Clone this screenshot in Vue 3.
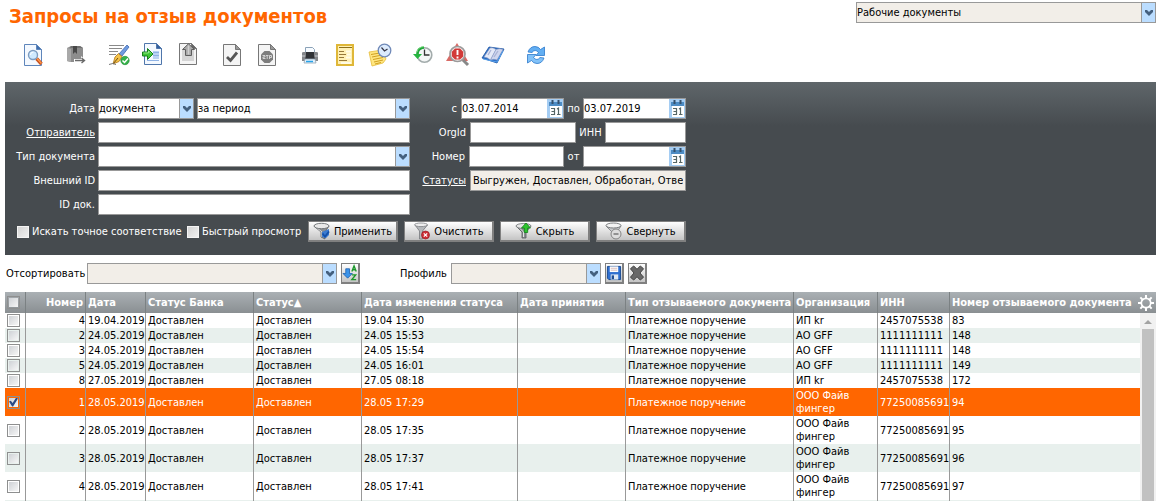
<script setup>
import { ref } from 'vue'

const section = ref('Рабочие документы')
const dateKind = ref('документа')
const dateRange = ref('за период')
const dateFrom = ref('03.07.2014')
const dateTo = ref('03.07.2019')
const statuses = ref('Выгружен, Доставлен, Обработан, Отвергнут')

const columns = [
  { key: 'num', title: 'Номер' },
  { key: 'date', title: 'Дата' },
  { key: 'bank', title: 'Статус Банка' },
  { key: 'status', title: 'Статус▲' },
  { key: 'changed', title: 'Дата изменения статуса' },
  { key: 'accepted', title: 'Дата принятия' },
  { key: 'type', title: 'Тип отзываемого документа' },
  { key: 'org', title: 'Организация' },
  { key: 'inn', title: 'ИНН' },
  { key: 'ref', title: 'Номер отзываемого документа' },
]

const make = (num, date, changed, org, inn, refNum, checked = false) => ({
  num, date, bank: 'Доставлен', status: 'Доставлен', changed, accepted: '',
  type: 'Платежное поручение', org, inn, ref: refNum, checked,
})

const rows = ref([
  make('4', '19.04.2019', '19.04 15:30', 'ИП kr', '2457075538', '83'),
  make('2', '24.05.2019', '24.05 15:53', 'АО GFF', '1111111111', '148'),
  make('3', '24.05.2019', '24.05 15:54', 'АО GFF', '1111111111', '148'),
  make('5', '24.05.2019', '24.05 16:01', 'АО GFF', '1111111111', '149'),
  make('8', '27.05.2019', '27.05 08:18', 'ИП kr', '2457075538', '172'),
  make('1', '28.05.2019', '28.05 17:29', 'ООО Файв фингер', '772500856912', '94', true),
  make('2', '28.05.2019', '28.05 17:35', 'ООО Файв фингер', '772500856912', '95'),
  make('3', '28.05.2019', '28.05 17:37', 'ООО Файв фингер', '772500856912', '96'),
  make('4', '28.05.2019', '28.05 17:41', 'ООО Файв фингер', '772500856912', '97'),
])
</script>

<template>
  <div class="page">
    <header class="top">
      <h1>Запросы на отзыв документов</h1>
      <div class="combo muted section">
        <select v-model="section" aria-label="Раздел"><option>Рабочие документы</option></select>
        <span class="arrow"><svg viewBox="0 0 8 6"><path d="M0 0h2l2 2 2-2h2v2L4 6 0 2z" /></svg></span>
      </div>
    </header>

    <nav class="toolbar">
      <div class="group">
        <button aria-label="Просмотр">
          <svg viewBox="0 0 24 24">
            <path d="M3.500 1.500h12l5 5v16h-17z" fill="#f4f9ff" stroke="#5f86bb" />
            <path d="M15.500 1.500v5h5z" fill="#3f6fae" stroke="#5f86bb" />
            <path d="M15.500 15.500l5 5.500" stroke="#c8501e" stroke-width="3.400" />
            <path d="M16 15.500l4.500 5" stroke="#ff9a4a" stroke-width="1.200" />
            <circle cx="12" cy="12" r="4.500" fill="#cfeaff" stroke="#7d9cc0" stroke-width="1.400" />
            <path d="M9.500 12a3 3 0 0 1 3-3" fill="none" stroke="#fff" />
          </svg>
        </button>
      </div>
      <div class="group">
        <button aria-label="Отправить">
          <svg viewBox="0 0 24 24">
            <path d="M3 5l4-2h9l3 2v10l-3 4H7l-4-1z" fill="#8d8d8d" />
            <path d="M3 5l4 1v13l-4-1z" fill="#a9a9a9" />
            <path d="M7 3h9l3 2H6z" fill="#707070" />
            <path d="M9 3h4v8l-2-2-2 2z" fill="#484848" />
            <path d="M10 16h7v-3l5 4.500-5 4.500v-3h-7z" fill="#fff" />
            <path d="M11 17.500h9M17.500 15l3 2.500-3 2.500" fill="none" stroke="#6a6a6a" stroke-width="1.400" />
          </svg>
        </button>
      </div>
      <div class="group">
        <button aria-label="Подписать">
          <svg viewBox="0 0 24 24">
            <path d="M2 2.500h15M2 5.500h13M2 8.500h9M2 11.500h7" stroke="#8a8a8a" />
            <path d="M20 2l2 2-7 9-3-2z" fill="#6f9be0" stroke="#3e67b0" stroke-width=".8" />
            <path d="M11.500 10.500l3.500 3-3 5-6 2.500 2-7z" fill="#f3c24b" stroke="#b27614" stroke-width=".8" />
            <path d="M6 21l5-6" stroke="#6b4a12" />
            <path d="M2 21.500q4-2 7 0" fill="none" stroke="#777" />
            <circle cx="18" cy="17.500" r="4.200" fill="#35b14a" stroke="#1c8a31" stroke-width=".6" />
            <path d="M15.500 17.500l2 2 3.500-4" fill="none" stroke="#fff" stroke-width="1.500" />
          </svg>
        </button>
        <button aria-label="Импорт">
          <svg viewBox="0 0 24 24">
            <path d="M2.500.5h12l5 5v16h-17z" fill="#f4f9ff" stroke="#4f76ab" />
            <path d="M14.500.5v5h5z" fill="#34609f" stroke="#4f76ab" />
            <path d="M11 8h6v8h-6z" fill="#bcd3f3" />
            <path d="M11 9.500h6M11 12.500h6M5 17.500h12" stroke="#8fb2e4" />
            <path d="M.5 9h5V5.500l5.500 5.500-5.500 5.500V13h-5z" fill="#3fc636" stroke="#16801a" />
            <path d="M1.500 10h5V8l2.500 2.500" fill="none" stroke="#a5f09b" stroke-width=".8" />
          </svg>
        </button>
        <button aria-label="Экспорт">
          <svg viewBox="0 0 24 24">
            <path d="M2.500.5h12l5 5v16h-17z" fill="#f5f5f5" stroke="#777" />
            <path d="M14.500.5v5h5z" fill="#666" stroke="#777" />
            <path d="M5 7h4v10H5zM14 7h3v10h-3zM5 13h12v5H5z" fill="#d5d5d5" />
            <path d="M11.500.8l6 5.700h-3v6h-6v-6h-3z" fill="#aaa" stroke="#5e5e5e" />
            <path d="M11.500 2.500v9" stroke="#d0d0d0" stroke-width="1.500" />
          </svg>
        </button>
      </div>
      <div class="group">
        <button aria-label="Принять">
          <svg viewBox="0 0 24 24">
            <path d="M3.500 1.500h12l5 5v16h-17z" fill="#f4f4f4" stroke="#777" />
            <path d="M15.500 1.500v5h5z" fill="#999" stroke="#777" />
            <path d="M7 14l3.500 3.500L17 9.500" fill="none" stroke="#555" stroke-width="2.800" />
          </svg>
        </button>
        <button aria-label="Отклонить">
          <svg viewBox="0 0 24 24">
            <path d="M3.500 1.500h12l5 5v16h-17z" fill="#f4f4f4" stroke="#777" />
            <path d="M15.500 1.500v5h5z" fill="#999" stroke="#777" />
            <path d="M9.500 8h5l3.500 3.500v5L14.500 20h-5L6 16.500v-5z" fill="#7d7d7d" />
            <path d="M7.500 12.500h2.500v1.500H8v1.500h2.500M11 12.500h2.500M12.200 12.500v3.500M14.500 16v-3.500h2v2h-2" fill="none" stroke="#ddd" stroke-width=".9" />
          </svg>
        </button>
      </div>
      <div class="group">
        <button aria-label="Печать">
          <svg viewBox="0 0 24 24">
            <path d="M7.500 4.500h7l2 2v5h-9z" fill="#f7fbff" stroke="#8ba2b8" />
            <path d="M4 10q0-1 1.500-1h13q1.500 0 1.500 1v8H4z" fill="#84878b" />
            <path d="M8 9h8v4l1 3H7l1-3z" fill="#303337" />
            <path d="M4 13h3M17 13h3" stroke="#c8cbd0" />
            <path d="M7 16h10l1 4H6z" fill="#e3f2fd" stroke="#93a4b2" stroke-width=".8" />
            <path d="M8 18.500h7" stroke="#29a3e8" stroke-width="1.500" />
          </svg>
        </button>
        <button aria-label="Реквизиты">
          <svg viewBox="0 0 24 24">
            <path d="M4 2h16v20H4z" fill="#fff0b4" stroke="#dfb738" stroke-width="2" />
            <path d="M6 4.500h13" stroke="#8d701c" />
            <path d="M6 8.500h5M6 11.500h7M6 14.500h5M6 17.500h8" stroke="#97793a" />
            <path d="M13 8.500h5M14 11.500h4M13 14.500h5M8 20h10" stroke="#fffbe6" stroke-width="2" />
          </svg>
        </button>
        <button aria-label="История заметок">
          <svg viewBox="0 0 24 24">
            <path d="M1 9l13-2 4 9-3 4-11 3z" fill="#ffe680" stroke="#e6bd3a" stroke-width=".8" />
            <path d="M3 11.500l9-1.500M4 14l10-2M5 16.500l10-2M6 19l9-2M7 21l6-1.500" stroke="#d0a020" />
            <circle cx="16.500" cy="7.500" r="6.300" fill="#dcebfd" stroke="#7089b8" stroke-width="1.300" />
            <path d="M13.500 4.500l3 3.500 3-2" fill="none" stroke="#334" stroke-width="1.200" />
          </svg>
        </button>
      </div>
      <div class="group">
        <button aria-label="История">
          <svg viewBox="0 0 24 24">
            <circle cx="13.500" cy="12" r="7.300" fill="#f4f6f6" stroke="#a3acac" stroke-width="1.600" />
            <path d="M13.500 6.500V12h5" fill="none" stroke="#333" stroke-width="1.300" />
            <path d="M13 4.500Q6.500 5 6.500 11" fill="none" stroke="#22a83a" stroke-width="2.600" />
            <path d="M2 11h9l-4.500 5z" fill="#25b540" />
            <path d="M13 3.500Q7 4 6 9" fill="none" stroke="#8be38f" stroke-width=".8" />
          </svg>
        </button>
        <button aria-label="Ошибки">
          <svg viewBox="0 0 24 24">
            <path d="M11 0l11 18H0z" fill="#d96a65" />
            <path d="M17 17l5 5" stroke="#888" stroke-width="3" />
            <circle cx="11.500" cy="11" r="7.500" fill="#f8eded" stroke="#9b9b9b" stroke-width="1.700" />
            <path d="M9 5.500h5l3.200 3.200v4.800L14 16.500H9l-3.200-3.200V8.700z" fill="#d23a38" />
            <path d="M11.500 7v5M11.500 13.500v2" stroke="#fff" stroke-width="1.900" />
          </svg>
        </button>
        <button aria-label="Справочник">
          <svg viewBox="0 0 24 24">
            <path d="M1 15L8 4l15 2-7 14z" fill="#2e6fc5" stroke="#1c54a3" stroke-width=".8" />
            <path d="M3 14l6-9q3-1 6 1.500L9.500 17Q6 14 3 14z" fill="#e5eaf8" stroke="#8d9cc4" stroke-width=".6" />
            <path d="M9.500 17L15 6.500q4-1.500 7 0L16 17q-3-1.500-6.500 0z" fill="#cfd6ee" stroke="#8d9cc4" stroke-width=".6" />
            <path d="M7 12l3-5M13 14l4-6" stroke="#aab3d6" stroke-width="1.300" />
            <path d="M2 16l14 3 6-11" fill="none" stroke="#57a2ee" />
          </svg>
        </button>
      </div>
      <div class="group">
        <button aria-label="Обновить">
          <svg viewBox="0 0 24 24">
            <path d="M4 9Q6 3.500 11 3.500q3.500 0 5.500 3L20.500 4v8.500h-8.500l2.500-3Q11 5.500 8 9.500z" fill="#62aef2" stroke="#2c79cc" stroke-width=".8" />
            <path d="M20 15q-2 5.500-7 5.500-3.500 0-5.500-3L3.500 20v-8.500h8.500l-2.500 3q3.500 4 6.500 0z" fill="#82c2f8" stroke="#2c79cc" stroke-width=".8" />
          </svg>
        </button>
      </div>
    </nav>

    <form class="filter" @submit.prevent>
      <div class="cols">
        <div class="left">
          <div class="row">
            <label for="dk">Дата</label>
            <div class="combo kind">
              <select id="dk" v-model="dateKind"><option>документа</option></select>
              <span class="arrow"><svg viewBox="0 0 8 6"><path d="M0 0h2l2 2 2-2h2v2L4 6 0 2z" /></svg></span>
            </div>
            <div class="combo grow">
              <select v-model="dateRange" aria-label="Период"><option>за период</option></select>
              <span class="arrow"><svg viewBox="0 0 8 6"><path d="M0 0h2l2 2 2-2h2v2L4 6 0 2z" /></svg></span>
            </div>
          </div>
          <div class="row"><label for="sender"><a href="#">Отправитель</a></label><input id="sender" class="grow" type="text"></div>
          <div class="row">
            <label for="dtype">Тип документа</label>
            <div class="combo grow">
              <select id="dtype"><option></option></select>
              <span class="arrow"><svg viewBox="0 0 8 6"><path d="M0 0h2l2 2 2-2h2v2L4 6 0 2z" /></svg></span>
            </div>
          </div>
          <div class="row"><label for="ext">Внешний ID</label><input id="ext" class="grow" type="text"></div>
          <div class="row"><label for="docid">ID док.</label><input id="docid" class="grow" type="text"></div>
        </div>

        <div class="right">
          <div class="row">
            <label for="from">с</label>
            <div class="date-field">
              <input id="from" v-model="dateFrom" type="text">
              <button type="button" aria-label="Календарь"><svg viewBox="0 0 16 19"><path d="M0 0h16v19H0z" fill="#a5cdf3" /><path d="M3 6h12v12H3z" fill="#fff" /><path d="M2 3h13v4H2z" fill="#4d8cc4" /><path d="M5.500 1v4M11.500 1v4" stroke="#35506c" stroke-width="2" /><path d="M4 9.500h3.500v6H4M4.500 12.500h3M10 10l1.500-1v7M10 15.500h3.500" fill="none" stroke="#566" stroke-width="1.200" /></svg></button>
            </div>
            <label for="to" class="mid">по</label>
            <div class="date-field">
              <input id="to" v-model="dateTo" type="text">
              <button type="button" aria-label="Календарь"><svg viewBox="0 0 16 19"><path d="M0 0h16v19H0z" fill="#a5cdf3" /><path d="M3 6h12v12H3z" fill="#fff" /><path d="M2 3h13v4H2z" fill="#4d8cc4" /><path d="M5.500 1v4M11.500 1v4" stroke="#35506c" stroke-width="2" /><path d="M4 9.500h3.500v6H4M4.500 12.500h3M10 10l1.500-1v7M10 15.500h3.500" fill="none" stroke="#566" stroke-width="1.200" /></svg></button>
            </div>
          </div>
          <div class="row">
            <label for="orgid">OrgId</label><input id="orgid" class="org-input" type="text">
            <label for="inn" class="mid wide">ИНН</label><input id="inn" class="inn-input" type="text">
          </div>
          <div class="row">
            <label for="number">Номер</label><input id="number" class="num-input" type="text">
            <label for="ofdate" class="mid">от</label>
            <div class="date-field">
              <input id="ofdate" type="text">
              <button type="button" aria-label="Календарь"><svg viewBox="0 0 16 19"><path d="M0 0h16v19H0z" fill="#a5cdf3" /><path d="M3 6h12v12H3z" fill="#fff" /><path d="M2 3h13v4H2z" fill="#4d8cc4" /><path d="M5.500 1v4M11.500 1v4" stroke="#35506c" stroke-width="2" /><path d="M4 9.500h3.500v6H4M4.500 12.500h3M10 10l1.500-1v7M10 15.500h3.500" fill="none" stroke="#566" stroke-width="1.200" /></svg></button>
            </div>
          </div>
          <div class="row"><label for="st"><a href="#">Статусы</a></label><input id="st" v-model="statuses" class="st-input" type="text" readonly></div>
        </div>
      </div>

      <div class="actions">
        <label class="check first"><input type="checkbox">Искать точное соответствие</label>
        <label class="check"><input type="checkbox">Быстрый просмотр</label>
        <div class="buttons">
          <button type="button">
            <svg viewBox="0 0 18 18"><path d="M1 4l7 6v5l4 2v-7l4-6z" fill="#8b8f93" stroke="#5a5e62" stroke-width=".8" /><path d="M3 5l6 5v5" fill="none" stroke="#ddd" /><ellipse cx="8.500" cy="4" rx="7.500" ry="2.700" fill="#e8e8e8" stroke="#6a6e72" stroke-width=".9" /><path d="M9 10l7-3v6l-3 3-4-1z" fill="#3b7bd0" /><path d="M9.500 11.500l2.500 3 4-5" fill="none" stroke="#1450a8" stroke-width="1.800" /></svg>
            Применить
          </button>
          <button type="button">
            <svg viewBox="0 0 18 18"><path d="M2 3l4.500 6v8h3V9l5-6z" fill="#b5b8bb" stroke="#76797c" stroke-width=".8" /><ellipse cx="8" cy="2.800" rx="6.500" ry="1.800" fill="#eee" stroke="#808386" stroke-width=".8" /><circle cx="12.500" cy="13" r="4" fill="#cf2d36" stroke="#931e27" stroke-width=".7" /><path d="M10.800 11.300l3.400 3.400M14.200 11.300l-3.400 3.400" stroke="#fff" stroke-width="1.200" /></svg>
            Очистить
          </button>
          <button type="button">
            <svg viewBox="0 0 18 18"><path d="M1 4l6 6v6h4v-6l5-6z" fill="#8b8f93" stroke="#55595c" stroke-width=".8" /><path d="M3.500 5l5 5v5" fill="none" stroke="#e5e5e5" /><ellipse cx="8.500" cy="4" rx="7.500" ry="2.500" fill="#e6e6e6" stroke="#6a6e72" stroke-width=".8" /><path d="M11 1l4.500 5h-2.800v4.500H9.300V6H6.500z" fill="#2fc42f" stroke="#12801a" stroke-width=".8" /></svg>
            Скрыть
          </button>
          <button type="button">
            <svg viewBox="0 0 18 18"><path d="M1 4l7 7v5h4v-6l4-6z" fill="#c7c9cb" stroke="#777a7d" stroke-width=".8" /><ellipse cx="8.500" cy="3.500" rx="7.500" ry="2.500" fill="#f2f2f2" stroke="#6d7073" stroke-width=".9" /><circle cx="11" cy="12" r="5" fill="#ddd" stroke="#858585" /><path d="M8.500 12h5" stroke="#777" stroke-width="1.500" /></svg>
            Свернуть
          </button>
        </div>
      </div>
    </form>

    <div class="tools">
      <label for="sort" class="sort-label">Отсортировать</label>
      <div class="combo muted sort">
        <select id="sort"><option></option></select>
        <span class="arrow"><svg viewBox="0 0 8 6"><path d="M0 0h2l2 2 2-2h2v2L4 6 0 2z" /></svg></span>
      </div>
      <button class="mini" aria-label="Сортировка">
        <svg viewBox="0 0 17 19"><path d="M4 5h4v5h3l-5 5-5-5h3z" fill="#3c94ea" stroke="#155bab" stroke-width=".8" /><path d="M10.500 8l2.300-6 2.300 6M11.200 6h3.200" fill="none" stroke="#1c982c" stroke-width="1.500" /><path d="M10.500 11.500h4l-4 5h4.500" fill="none" stroke="#1c982c" stroke-width="1.500" /></svg>
      </button>
      <label for="profile" class="profile-label">Профиль</label>
      <div class="combo muted profile">
        <select id="profile"><option></option></select>
        <span class="arrow"><svg viewBox="0 0 8 6"><path d="M0 0h2l2 2 2-2h2v2L4 6 0 2z" /></svg></span>
      </div>
      <button class="mini" aria-label="Сохранить">
        <svg viewBox="0 0 17 19"><path d="M1.500 2.500h14v14H3l-1.500-1.500z" fill="#2f6fd0" stroke="#16478f" /><path d="M4 2.500h9v6H4z" fill="#fff" /><path d="M5 4.500h7M5 6.500h7" stroke="#c9a9a9" stroke-width=".8" /><path d="M5 11h8v5.500H5z" fill="#dfe7f2" /><path d="M6 12h2.500v4H6z" fill="#1e4c92" /></svg>
      </button>
      <button class="mini" aria-label="Удалить">
        <svg viewBox="0 0 17 19"><path d="M1.500 5L5 2l3.500 3.500L12 2l3.500 3-3.800 4.500 3.800 4.500-3.500 3-3.500-3.500L5 17l-3.500-3 3.800-4.500z" fill="#686868" stroke="#3f3f3f" /></svg>
      </button>
    </div>

    <div class="grid-box">
      <table>
        <colgroup>
          <col class="c-check"><col v-for="c in columns" :key="c.key" :class="'c-' + c.key">
        </colgroup>
        <thead>
          <tr>
            <th><input type="checkbox" aria-label="Выбрать все"></th>
            <th v-for="c in columns" :key="c.key" :class="c.key">{{ c.title }}</th>
          </tr>
        </thead>
        <tbody>
          <tr v-for="(r, i) in rows" :key="i" :class="{ selected: r.checked }">
            <td><input v-model="r.checked" type="checkbox" aria-label="Выбрать строку"></td>
            <td v-for="c in columns" :key="c.key" :class="c.key">{{ r[c.key] }}</td>
          </tr>
          <tr class="next"><td></td><td v-for="c in columns" :key="c.key"></td></tr>
        </tbody>
      </table>
      <button class="gear" aria-label="Настройка колонок">
        <svg viewBox="0 0 18 18"><g fill="#fff"><rect v-for="a in 8" :key="a" x="8" y="1" width="2" height="4" :transform="`rotate(${a * 45} 9 9)`" /></g><circle cx="9" cy="9" r="4.700" fill="none" stroke="#fff" stroke-width="1.700" /></svg>
      </button>
      <div class="scroll"><i class="up"></i><i class="thumb"></i></div>
    </div>
  </div>
</template>

<style>
body { margin: 0; background: #fff; }
</style>

<style scoped>
* { box-sizing: border-box; }
.page {
  height: 100vh; overflow: hidden; display: flex; flex-direction: column;
  padding: 0 4px 0 5px; background: #fff; color: #000;
  font: 11px/13px "DejaVu Sans Condensed", "Noto Sans", sans-serif;
}
input, select, button { font: inherit; color: inherit; margin: 0; border-radius: 0; }
button { padding: 0; border: 0; background: none; cursor: pointer; }
svg { display: block; }
.top { display: flex; justify-content: space-between; align-items: flex-start; padding-top: 2px; }
h1 { margin: 0; padding: 1px 0 0 4px; color: #f60; font-size: 20px; line-height: 26px; font-weight: bold; white-space: nowrap; }

.combo { position: relative; height: 21px; }
.combo select {
  appearance: none; display: block; width: 100%; height: 21px; padding: 0 16px 0 0;
  border: 1px solid #999; background: #fff; outline: 0;
}
.combo.muted select { background: #f2eee8; }
.arrow {
  position: absolute; top: 1px; right: 1px; width: 14px; height: 19px; pointer-events: none;
  display: flex; align-items: center; justify-content: center; background: #bbddff; border-left: 1px solid #999;
}
.arrow svg { width: 8px; height: 6px; fill: #44607f; }
.section { width: 300px; }

.toolbar { display: flex; gap: 19px; padding: 14px 0 15px 16px; }
.group { display: flex; gap: 11px; }
.group button, .group svg { width: 24px; height: 24px; }

.filter {
  padding: 16px 0 13px; color: #fff;
  background: linear-gradient(#5f666a, #464b4f 44px);
}
.cols { display: flex; }
.left { width: 405px; display: flex; flex-direction: column; gap: 3px; }
.right { width: 276px; display: flex; flex-direction: column; gap: 3px; }
.row { display: flex; align-items: center; height: 21px; }
.left .row { gap: 3px; }
.left label { width: 90px; text-align: right; white-space: nowrap; }
.left label, .right label { flex: none; }
.right .row { justify-content: flex-end; }
.right label { padding-right: 4px; }
.right label.mid { width: 19px; padding: 0; text-align: center; }
.right label.wide { width: 29px; }
a { color: inherit; text-decoration: underline; }
.grow { flex: 1; min-width: 0; }
.kind { width: 96px; }
.filter select, .filter input { color: #000; }
input[type="text"] { height: 21px; padding: 0; border: 1px solid #999; background: #fff; outline: 0; }
.date-field { display: flex; width: 103px; height: 21px; border: 1px solid #999; background: #fff; }
.date-field input[type="text"] { flex: 1; min-width: 0; height: 19px; border: 0; }
.date-field svg { width: 16px; height: 19px; }
.org-input { width: 106px; }
.inn-input { width: 81px; }
.num-input { width: 95px; }
.right .st-input { width: 216px; background: #f2eee8; padding: 0 2px; }

.actions { display: flex; align-items: center; padding-top: 6px; width: 681px; }
.check { display: flex; align-items: center; gap: 3px; white-space: nowrap; }
.check.first { padding-left: 12px; width: 182px; }
.check input {
  appearance: none; width: 12px; height: 12px; border: 1px solid #f4f4f4;
  background: linear-gradient(135deg, #d4d4d4, #f0f0f0);
}
.buttons { display: flex; gap: 6px; margin-left: auto; }
.buttons button {
  display: flex; align-items: center; justify-content: center; gap: 3px; width: 90px; height: 21px; color: #000;
  border: solid #808080; border-width: 1px 2px 2px 1px; background: linear-gradient(#fff, #c4c4c4);
}
.buttons svg { width: 18px; height: 18px; }

.tools { display: flex; align-items: center; padding: 8px 0; }
.sort-label { width: 82px; padding-left: 1px; white-space: nowrap; }
.sort { width: 250px; }
.mini {
  width: 19px; height: 21px; margin-left: 4px; border: solid #808080; border-width: 1px 2px 2px 1px;
  background: linear-gradient(#fff, #c4c4c4); overflow: hidden;
}
.mini svg { width: 16px; height: 18px; }
.profile-label { width: 91px; padding-left: 40px; white-space: nowrap; }
.profile { width: 150px; }

.grid-box { position: relative; flex: 1; min-height: 0; overflow: hidden; }
table { width: 100%; table-layout: fixed; border-collapse: separate; border-spacing: 0; }
.c-check { width: 21px; }
.c-num, .c-date { width: 60px; }
.c-bank, .c-status, .c-accepted { width: 108px; }
.c-changed { width: 156px; }
.c-type { width: 168px; }
.c-org { width: 84px; }
.c-inn { width: 72px; }
th {
  height: 21px; padding: 0 0 0 2px; text-align: left; color: #fff; white-space: nowrap; overflow: hidden;
  background: linear-gradient(#aab0b4, #8a8f92); border-right: 1px solid #7b8183;
}
td { padding: 1px 0 1px 2px; white-space: nowrap; overflow: hidden; border-right: 1px solid #999; }
th:last-child, td:last-child { border-right: 0; }
th.num, td.num { text-align: right; }
th.num { padding-right: 2px; }
td.org { white-space: normal; }
tbody tr:nth-child(even) { background: #e8f0ed; }
tbody tr.selected { background: #f60; color: #fff; }
.next td { height: 28px; }
th input, td input {
  appearance: none; display: block; position: relative; width: 13px; height: 13px;
  border: 1px solid #8e8f8f; background: linear-gradient(135deg, #cfd2d6, #f6f6f6) content-box #fff; padding: 1px;
}
td input:checked::after {
  content: ""; position: absolute; inset: 1px; background: #2b4a86;
  clip-path: polygon(0 45%, 20% 35%, 40% 62%, 80% 0, 100% 10%, 45% 100%, 35% 100%);
}
.gear { position: absolute; top: 2px; right: 1px; }
.gear svg { width: 18px; height: 18px; }
.scroll { position: absolute; top: 21px; right: 0; bottom: 0; width: 16px; background: #f1f1f1; }
.up { position: absolute; top: 7px; left: 4px; border: solid transparent; border-width: 0 4px 4px; border-bottom-color: #a3a3a3; }
.thumb { position: absolute; top: 16px; bottom: 0; left: 2px; width: 12px; background: #c1c1c1; }
</style>
